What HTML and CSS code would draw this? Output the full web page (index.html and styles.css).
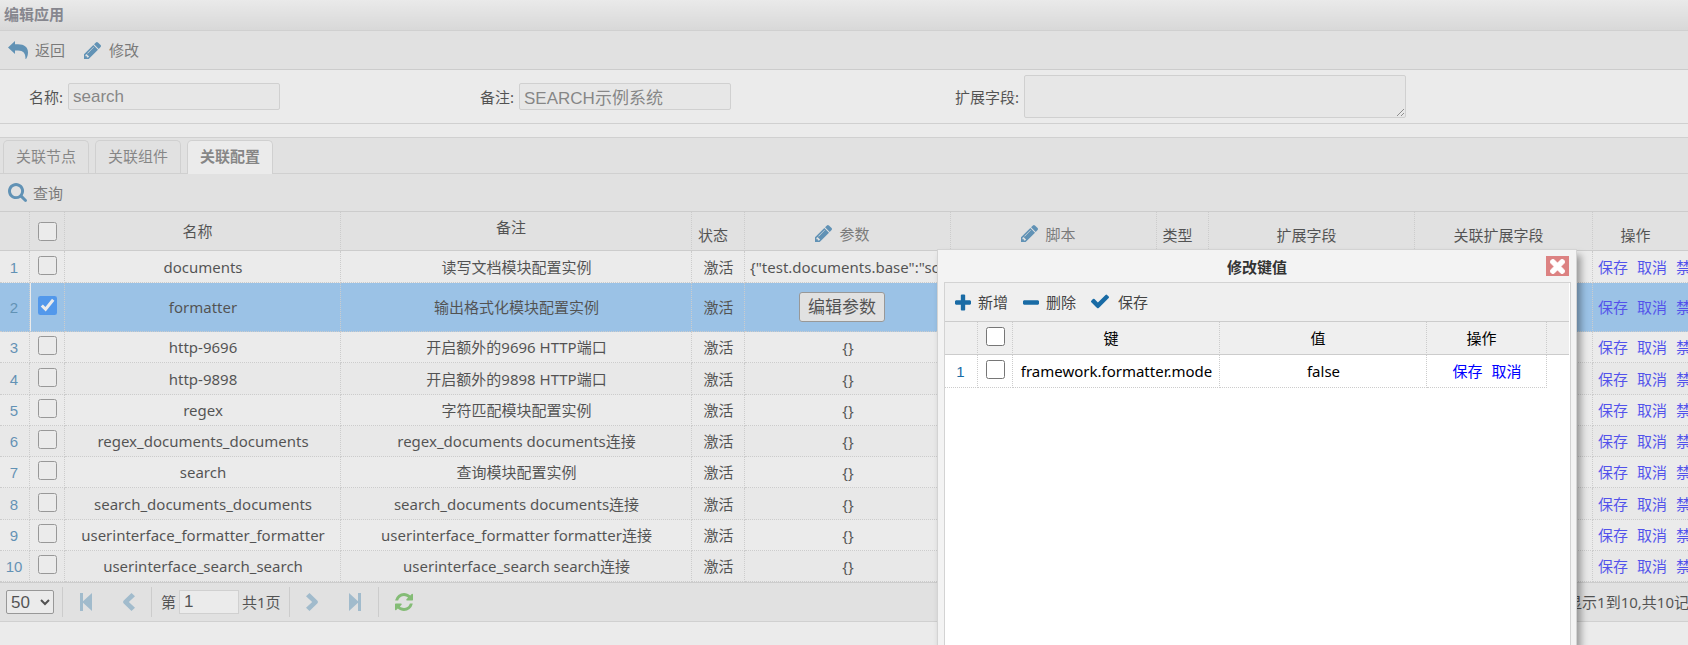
FILE: index.html
```html
<!DOCTYPE html>
<html lang="zh-CN">
<head>
<meta charset="utf-8">
<title>编辑应用</title>
<link rel="stylesheet" href="styles.css">
</head>
<body>
<svg class="defs" aria-hidden="true">
  <symbol id="i-reply" viewBox="0 0 20 18"><path d="M0 6.400 7 0v3.200h3C16.500 3.400 20 6 20 11.400c0 2.400-.8 4.600-1.800 6.300-.3.400-.9.200-.8-.3.300-4.200-1.600-7.900-7.400-7.900H7v3.400z"/></symbol>
  <symbol id="i-pencil" viewBox="128 149 1515 1515"><path d="M491 1536l91-91-235-235-91 91v107h128v128h107zm523-928q0-22-22-22-10 0-17 7l-542 542q-7 7-7 17 0 22 22 22 10 0 17-7l542-542q7-7 7-17zm-54-192l416 416-832 832h-416v-416zm683 96q0 53-37 90l-166 166-416-416 166-165q36-38 90-38 53 0 91 38l235 234q37 39 37 91z"/></symbol>
  <symbol id="i-search" viewBox="64 128 1664 1664"><path d="M1216 832q0-185-131.500-316.500t-316.500-131.500-316.500 131.500-131.500 316.500 131.500 316.500 316.500 131.500 316.500-131.500 131.500-316.500zm512 832q0 52-38 90t-90 38q-54 0-90-38l-343-342q-179 124-399 124-143 0-273.500-55.500t-225-150-150-225-55.500-273.500 55.500-273.500 150-225 225-150 273.500-55.500 273.500 55.500 225 150 150 225 55.500 273.500q0 220-124 399l343 343q37 37 37 90z"/></symbol>
  <symbol id="i-plus" viewBox="192 128 1408 1408"><path d="M1600 736v192q0 40-28 68t-68 28h-416v416q0 40-28 68t-68 28h-192q-40 0-68-28t-28-68v-416h-416q-40 0-68-28t-28-68v-192q0-40 28-68t68-28h416v-416q0-40 28-68t68-28h192q40 0 68 28t28 68v416h416q40 0 68 28t28 68z"/></symbol>
  <symbol id="i-minus" viewBox="192 128 1408 1408"><path d="M1600 736v192q0 40-28 68t-68 28h-1216q-40 0-68-28t-28-68v-192q0-40 28-68t68-28h1216q40 0 68 28t28 68z"/></symbol>
  <symbol id="i-check" viewBox="121 200 1550 1550"><path d="M1671 566q0 40-28 68l-724 724-136 136q-28 28-68 28t-68-28l-136-136-362-362q-28-28-28-68t28-68l136-136q28-28 68-28t68 28l294 295 656-657q28-28 68-28t68 28l136 136q28 28 28 68z"/></symbol>
  <symbol id="i-times" viewBox="302 366 1188 1188"><path d="M1490 1322q0 40-28 68l-136 136q-28 28-68 28t-68-28l-294-294-294 294q-28 28-68 28t-68-28l-136-136q-28-28-28-68t28-68l294-294-294-294q-28-28-28-68t28-68l136-136q28-28 68-28t68 28l294 294 294-294q28-28 68-28t68 28l136 136q28 28 28 68t-28 68l-294 294 294 294q28 28 28 68z"/></symbol>
  <symbol id="i-refresh" viewBox="128 128 1536 1536"><path d="M1639 1056q0 5-1 7-64 268-268 434.500t-478 166.500q-146 0-282.500-55t-243.500-157l-129 129q-19 19-45 19t-45-19-19-45v-448q0-26 19-45t45-19h448q26 0 45 19t19 45-19 45l-137 137q71 66 161 102t187 36q134 0 250-65t186-179q11-17 53-117 8-23 30-23h192q13 0 22.500 9.500t9.500 22.500zm25-800v448q0 26-19 45t-45 19h-448q-26 0-45-19t-19-45 19-45l138-138q-148-137-349-137-134 0-250 65t-186 179q-11 17-53 117-8 23-30 23h-199q-13 0-22.500-9.500t-9.500-22.500v-7q65-268 270-434.500t480-166.500q146 0 284 55.500t245 156.500l130-129q19-19 45-19t45 19 19 45z"/></symbol>
  <symbol id="i-first" viewBox="0 0 18 18"><path d="M3 0h3v8.200L15 0v18L6 9.800V18H3z"/></symbol>
  <symbol id="i-last" viewBox="0 0 18 18"><path d="M15 0h-3v8.200L3 0v18l9-8.200V18h3z"/></symbol>
  <symbol id="i-prev" viewBox="0 0 18 18"><path d="M11.500 0 15 3.200 8.800 9 15 14.800 11.500 18 3.500 10.200Q2.500 9 3.500 7.800z"/></symbol>
  <symbol id="i-next" viewBox="0 0 18 18"><path d="M6.500 0 3 3.200 9.200 9 3 14.800 6.500 18l8-7.800Q15.500 9 14.500 7.800z"/></symbol>
</svg>

<main class="page">
  <h1 class="panel-title">编辑应用</h1>
  <div class="toolbar">
    <button class="tool" type="button"><svg class="icon icon-wide"><use href="#i-reply"/></svg>返回</button>
    <button class="tool tool-edit" type="button"><svg class="icon"><use href="#i-pencil"/></svg>修改</button>
  </div>
  <form class="form">
    <div class="field"><label for="name">名称:</label><input class="text" id="name" type="text" value="search" readonly></div>
    <div class="field"><label for="remark">备注:</label><input class="text" id="remark" type="text" value="SEARCH示例系统" readonly></div>
    <div class="field"><label for="ext">扩展字段:</label><textarea class="text area" id="ext" readonly></textarea></div>
  </form>
  <nav class="tabs">
    <button class="tab" type="button">关联节点</button>
    <button class="tab" type="button">关联组件</button>
    <button class="tab active" type="button">关联配置</button>
  </nav>
  <div class="toolbar query">
    <button class="tool" type="button"><svg class="icon icon-search"><use href="#i-search"/></svg>查询</button>
  </div>

  <table class="grid">
    <colgroup>
      <col class="w-num"><col class="w-check"><col class="w-name"><col class="w-remark"><col class="w-state"><col class="w-value"><col class="w-value"><col class="w-type"><col class="w-value"><col class="w-rel"><col>
    </colgroup>
    <thead>
      <tr>
        <th></th>
        <th class="pick"><input type="checkbox" aria-label="全选"></th>
        <th class="mid">名称</th>
        <th class="high">备注</th>
        <th>状态</th>
        <th><button class="tool" type="button"><svg class="icon"><use href="#i-pencil"/></svg>参数</button></th>
        <th><button class="tool" type="button"><svg class="icon"><use href="#i-pencil"/></svg>脚本</button></th>
        <th>类型</th>
        <th>扩展字段</th>
        <th>关联扩展字段</th>
        <th>操作</th>
      </tr>
    </thead>
    <tbody>
      <tr><td class="num">1</td><td class="pick"><input type="checkbox" aria-label="documents"></td><td>documents</td><td>读写文档模块配置实例</td><td>激活</td><td>{"test.documents.base":"scripts"}</td><td></td><td></td><td></td><td></td><td class="ops"><a href="#">保存</a><a href="#">取消</a><a href="#">禁用</a></td></tr>
      <tr class="selected"><td class="num">2</td><td class="pick"><input type="checkbox" aria-label="formatter" checked></td><td>formatter</td><td>输出格式化模块配置实例</td><td>激活</td><td><button class="edit" type="button">编辑参数</button></td><td></td><td></td><td></td><td></td><td class="ops"><a href="#">保存</a><a href="#">取消</a><a href="#">禁用</a></td></tr>
      <tr><td class="num">3</td><td class="pick"><input type="checkbox" aria-label="http-9696"></td><td>http-9696</td><td>开启额外的9696 HTTP端口</td><td>激活</td><td>{}</td><td></td><td></td><td></td><td></td><td class="ops"><a href="#">保存</a><a href="#">取消</a><a href="#">禁用</a></td></tr>
      <tr><td class="num">4</td><td class="pick"><input type="checkbox" aria-label="http-9898"></td><td>http-9898</td><td>开启额外的9898 HTTP端口</td><td>激活</td><td>{}</td><td></td><td></td><td></td><td></td><td class="ops"><a href="#">保存</a><a href="#">取消</a><a href="#">禁用</a></td></tr>
      <tr><td class="num">5</td><td class="pick"><input type="checkbox" aria-label="regex"></td><td>regex</td><td>字符匹配模块配置实例</td><td>激活</td><td>{}</td><td></td><td></td><td></td><td></td><td class="ops"><a href="#">保存</a><a href="#">取消</a><a href="#">禁用</a></td></tr>
      <tr><td class="num">6</td><td class="pick"><input type="checkbox" aria-label="regex_documents_documents"></td><td>regex_documents_documents</td><td>regex_documents documents连接</td><td>激活</td><td>{}</td><td></td><td></td><td></td><td></td><td class="ops"><a href="#">保存</a><a href="#">取消</a><a href="#">禁用</a></td></tr>
      <tr><td class="num">7</td><td class="pick"><input type="checkbox" aria-label="search"></td><td>search</td><td>查询模块配置实例</td><td>激活</td><td>{}</td><td></td><td></td><td></td><td></td><td class="ops"><a href="#">保存</a><a href="#">取消</a><a href="#">禁用</a></td></tr>
      <tr><td class="num">8</td><td class="pick"><input type="checkbox" aria-label="search_documents_documents"></td><td>search_documents_documents</td><td>search_documents documents连接</td><td>激活</td><td>{}</td><td></td><td></td><td></td><td></td><td class="ops"><a href="#">保存</a><a href="#">取消</a><a href="#">禁用</a></td></tr>
      <tr><td class="num">9</td><td class="pick"><input type="checkbox" aria-label="userinterface_formatter_formatter"></td><td>userinterface_formatter_formatter</td><td>userinterface_formatter formatter连接</td><td>激活</td><td>{}</td><td></td><td></td><td></td><td></td><td class="ops"><a href="#">保存</a><a href="#">取消</a><a href="#">禁用</a></td></tr>
      <tr><td class="num">10</td><td class="pick"><input type="checkbox" aria-label="userinterface_search_search"></td><td>userinterface_search_search</td><td>userinterface_search search连接</td><td>激活</td><td>{}</td><td></td><td></td><td></td><td></td><td class="ops"><a href="#">保存</a><a href="#">取消</a><a href="#">禁用</a></td></tr>
    </tbody>
  </table>

  <footer class="pager">
    <select class="size" aria-label="每页条数"><option>50</option></select>
    <div class="group nav-pair">
      <button class="nav" type="button" aria-label="首页"><svg class="icon"><use href="#i-first"/></svg></button>
      <button class="nav" type="button" aria-label="上一页"><svg class="icon"><use href="#i-prev"/></svg></button>
    </div>
    <div class="group jump">
      <label for="pageno">第</label><input class="pageno" id="pageno" type="text" value="1"><span>共1页</span>
    </div>
    <div class="group nav-pair">
      <button class="nav" type="button" aria-label="下一页"><svg class="icon"><use href="#i-next"/></svg></button>
      <button class="nav" type="button" aria-label="末页"><svg class="icon"><use href="#i-last"/></svg></button>
    </div>
    <div class="group reload">
      <button class="nav refresh" type="button" aria-label="刷新"><svg class="icon"><use href="#i-refresh"/></svg></button>
    </div>
    <span class="info">显示1到10,共10记录</span>
  </footer>
</main>

<div class="mask"></div>

<section class="dialog" role="dialog" aria-labelledby="dlg-title">
  <header class="dialog-head">
    <h2 class="dialog-title" id="dlg-title">修改键值</h2>
    <button class="close" type="button" aria-label="关闭"><svg class="icon"><use href="#i-times"/></svg></button>
  </header>
  <div class="dialog-body">
    <div class="toolbar">
      <button class="tool" type="button"><svg class="icon"><use href="#i-plus"/></svg>新增</button>
      <button class="tool" type="button"><svg class="icon"><use href="#i-minus"/></svg>删除</button>
      <button class="tool tool-save" type="button"><svg class="icon icon-check"><use href="#i-check"/></svg>保存</button>
    </div>
    <table class="grid pairs">
      <colgroup><col class="w-dnum"><col class="w-check"><col class="w-pair"><col class="w-pair"><col class="w-dops"><col></colgroup>
      <thead>
        <tr><th></th><th class="pick"><input type="checkbox" aria-label="全选"></th><th>键</th><th>值</th><th>操作</th><th></th></tr>
      </thead>
      <tbody>
        <tr><td class="num">1</td><td class="pick"><input type="checkbox" aria-label="framework.formatter.mode"></td><td>framework.formatter.mode</td><td>false</td><td class="ops"><a href="#">保存</a><a href="#">取消</a></td><td class="blank"></td></tr>
      </tbody>
    </table>
  </div>
</section>
</body>
</html>
```
FILE: styles.css
```css
* {
  box-sizing: border-box;
}

body {
  margin: 0;
  height: 100vh;
  position: relative;
  overflow: hidden;
  background: #fff;
  color: #000;
  font: 15px/20px "Noto Sans", "Noto Sans CJK SC", sans-serif;
}

.defs {
  display: none;
}

button,
input,
select,
textarea {
  font: inherit;
  color: inherit;
  margin: 0;
}

.icon {
  width: 17px;
  height: 17px;
  flex: none;
  fill: #196ba5;
}

.icon-wide {
  width: 20px;
  height: 18px;
}

.icon-search {
  width: 19px;
  height: 19px;
}

/* Panel */
.panel-title {
  margin: 0;
  height: 31px;
  padding: 4px;
  border-bottom: 1px solid #d3d3d3;
  background: linear-gradient(#fdfdfd, #e0e0e0);
  color: #575765;
  font-size: 15px;
  line-height: 20px;
  font-weight: bold;
}

.toolbar {
  display: flex;
  align-items: center;
  gap: 19px;
  height: 39px;
  padding: 0 8px;
  border-bottom: 1px solid #ccc;
  background: #efefef;
}

.tool {
  display: inline-flex;
  align-items: center;
  gap: 7px;
  padding: 0;
  border: 0;
  background: none;
  color: #444;
}

.tool-edit {
  gap: 8px;
}

.query .tool {
  gap: 6px;
}

.form {
  display: grid;
  grid-template-columns: 451fr 475fr 733fr;
  align-items: center;
  height: 54px;
  padding: 0 0 0 29px;
  border-bottom: 1px solid #d3d3d3;
}

.field {
  display: flex;
  align-items: center;
  gap: 5px;
}

.text {
  width: 212px;
  height: 27px;
  padding: 0 4px;
  border: 1px solid #d3d3d3;
  border-radius: 2px;
  outline: 0;
  background: #f9f9f9;
  color: #575757;
  font-family: "Liberation Sans", "Noto Sans CJK SC", sans-serif;
  font-size: 17px;
}

.area {
  width: 382px;
  height: 43px;
}

/* Tabs */
.tabs {
  display: flex;
  align-items: flex-end;
  gap: 6px;
  height: 37px;
  margin-top: 13px;
  padding: 0 3px;
  border-top: 1px solid #d3d3d3;
  border-bottom: 1px solid #d3d3d3;
  background: #efefef;
}

.tab {
  height: 33px;
  padding: 0 12px 2px;
  border: 1px solid #d3d3d3;
  border-bottom: 0;
  border-radius: 5px 5px 0 0;
  background: #efefef;
  color: #575757;
}

.tab.active {
  height: 34px;
  margin-bottom: -1px;
  padding-bottom: 4px;
  background: #fff;
  font-weight: bold;
}

.query {
  height: 38px;
}

/* Data grid */
.grid {
  width: 100%;
  table-layout: fixed;
  border-collapse: separate;
  border-spacing: 0;
}

.w-num { width: 30px; }
.w-check { width: 35px; }
.w-name { width: 276px; }
.w-remark { width: 351px; }
.w-state { width: 53px; }
.w-value { width: 206px; }
.w-type { width: 52px; }
.w-rel { width: 178px; }
.w-dnum { width: 33px; }
.w-pair { width: 207px; }
.w-dops { width: 120px; }

.grid th,
.grid td {
  padding: 0 4px 0 5px;
  border-right: 1px dotted #ccc;
  text-align: center;
  font-weight: normal;
  white-space: nowrap;
  overflow: hidden;
}

.grid th:last-child,
.grid td:last-child {
  border-right: 0;
}

.grid th {
  height: 39px;
  padding: 8px 14px 0 4px;
  border-bottom: 1px solid #ccc;
  background: #efefef;
}

.grid th.mid {
  padding-top: 0;
}

.grid th.high {
  padding: 0 14px 8px 4px;
}

.grid td {
  height: 31px;
  border-bottom: 1px dotted #ccc;
}

.grid tr:nth-child(4n) td,
.grid tr:first-child td {
  height: 32px;
}

.grid tr:nth-child(even) td {
  background: #fafafa;
}

.grid tr.selected td {
  height: 49px;
  background: #7abbf7;
}

.grid .num {
  padding: 2px 1px 0 0;
  color: #196ba5;
  font-family: "Liberation Sans", sans-serif;
}

.grid .pick {
  padding: 0;
}

.grid tr.selected .pick {
  box-shadow: inset 1px 0 #fff;
}

.pick input {
  display: block;
  width: 19px;
  height: 19px;
  margin: 0 auto;
}

.grid tbody .pick {
  padding-bottom: 3px;
}

.grid .ops {
  text-align: left;
}

.ops a {
  color: #00f;
  text-decoration: none;
}

.ops a + a {
  margin-left: 9px;
}

.edit {
  height: 30px;
  margin-right: 12px;
  padding: 0 8px;
  border: 1px solid #767676;
  border-radius: 3px;
  background: #efefef;
  font-size: 17px;
}

/* Pager */
.pager {
  display: flex;
  align-items: center;
  height: 40px;
  padding: 0 6px;
  border-top: 1px solid #ccc;
  border-bottom: 1px solid #d3d3d3;
  background: #efefef;
}

.size {
  width: 48px;
  height: 24px;
  padding: 0;
  border: 1px solid #767676;
  border-radius: 2px;
  background: #fff;
  font-family: "Liberation Sans", sans-serif;
  font-size: 17px;
}

.group {
  display: flex;
  align-items: center;
  height: 30px;
  border-left: 1px solid #ccc;
}

.nav-pair {
  gap: 24px;
  padding: 0 13px;
}

.size + .nav-pair {
  margin-left: 8px;
}

.nav {
  display: flex;
  padding: 0;
  border: 0;
  background: none;
}

.nav-pair .nav {
  width: 19px;
  justify-content: center;
}

.nav .icon {
  width: 18px;
  height: 18px;
  fill: #84afcc;
}

.refresh .icon {
  fill: #54b13c;
}

.jump {
  gap: 3px;
  padding: 0 8px 0 9px;
}

.pageno {
  width: 60px;
  height: 24px;
  padding: 0 4px;
  border: 1px solid #d3d3d3;
  background: #fff;
  font-family: "Liberation Sans", sans-serif;
  font-size: 17px;
}

.reload {
  padding-left: 16px;
}

.info {
  margin-left: auto;
  margin-right: -22px;
  white-space: nowrap;
}

/* Modal */
.mask {
  position: absolute;
  inset: 0;
  background: #ccc;
  opacity: 0.4;
}

.dialog {
  position: absolute;
  top: 249px;
  bottom: 0;
  left: 937px;
  width: 640px;
  display: flex;
  flex-direction: column;
  padding: 0 5px 0 6px;
  border: 1px solid #d3d3d3;
  border-bottom: 0;
  background: #f3f3f3;
  box-shadow: 4px 6px 7px rgba(0, 0, 0, 0.35);
}

.dialog-head {
  display: flex;
  align-items: center;
  height: 32px;
}

.dialog-title {
  flex: 1;
  margin: 0;
  padding-left: 24px;
  padding-top: 2px;
  color: #333;
  font-size: 15px;
  line-height: 20px;
  text-align: center;
}

.close {
  display: flex;
  align-items: center;
  justify-content: center;
  width: 23px;
  height: 20px;
  margin-right: 2px;
  padding: 0;
  border: 0;
  background: #dc8282;
}

.close .icon {
  width: 15px;
  height: 15px;
  fill: #fff;
  stroke: #fff;
  stroke-width: 60px;
}

.dialog-body {
  flex: 1;
  padding-right: 1px;
  border: 1px solid #d3d3d3;
  border-bottom: 0;
  background: #fff;
}

.dialog .toolbar {
  gap: 15px;
  padding-left: 10px;
}

.dialog-body .icon {
  width: 16px;
}

.dialog-body .icon-check {
  width: 18px;
  height: 18px;
}

.tool-save {
  gap: 9px;
}

.pairs th {
  height: 33px;
  padding: 0 14px 0 4px;
}

.pairs .pick input {
  margin-top: -4px;
}

.pairs tbody .pick input {
  margin-top: 0;
}

.pairs tbody tr:first-child td {
  height: 33px;
}

.pairs tbody tr:first-child .blank {
  border: 0;
}

.pairs td.ops {
  text-align: center;
}
```
